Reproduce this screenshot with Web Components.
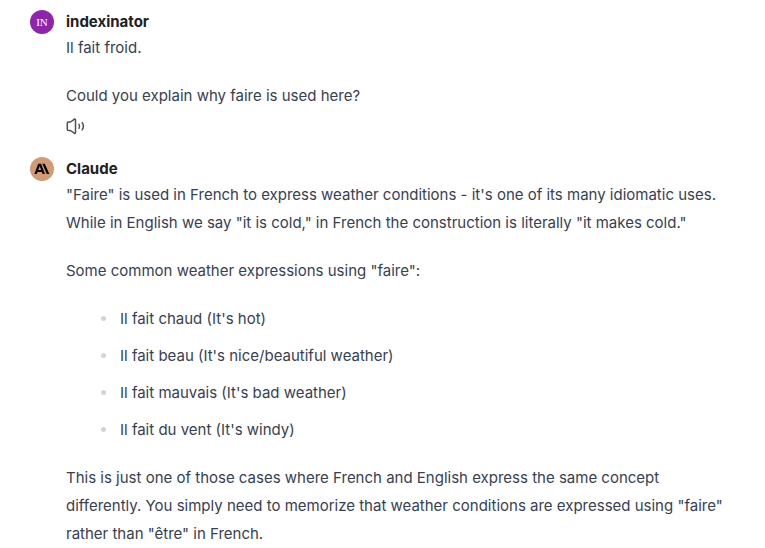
<!DOCTYPE html>
<html lang="en">
<head>
<meta charset="utf-8">
<title>Conversation</title>
<style>
body{margin:0;background:#fff;color:#374151;font:15px/28px Inter,"Liberation Sans",sans-serif}
li{padding-left:2px}
li::marker{color:#d1d5db}
</style>
</head>
<body>
<chat-thread>
  <chat-message author="indexinator">
    <user-avatar slot="avatar" initials="IN"></user-avatar>
    <p>Il fait froid.</p>
    <p>Could you explain why faire is used here?</p>
    <speak-button slot="actions"></speak-button>
  </chat-message>
  <chat-message author="Claude">
    <model-avatar slot="avatar"></model-avatar>
    <p>"Faire" is used in French to express weather conditions - it's one of its many idiomatic uses. While in English we say "it is cold," in French the construction is literally "it makes cold."</p>
    <p>Some common weather expressions using "faire":</p>
    <ul>
      <li>Il fait chaud (It's hot)</li>
      <li>Il fait beau (It's nice/beautiful weather)</li>
      <li>Il fait mauvais (It's bad weather)</li>
      <li>Il fait du vent (It's windy)</li>
    </ul>
    <p>This is just one of those cases where French and English express the same concept differently. You simply need to memorize that weather conditions are expressed using "faire" rather than "être" in French.</p>
  </chat-message>
</chat-thread>
<script>
class ShadowElement extends HTMLElement {
  connectedCallback() {
    if (!this.shadowRoot) this.attachShadow({mode: "open"}).innerHTML = this.render();
  }
}
customElements.define("chat-thread", class extends ShadowElement {
  render() { return `<style>
    :host{display:flex;flex-direction:column;gap:21px;padding:10px 30px 0}
    </style><slot></slot>`; }
});
customElements.define("chat-message", class extends ShadowElement {
  render() { return `<style>
    :host{display:grid;grid-template-columns:24px minmax(0,1fr);column-gap:12px}
    h2{margin:0;font-size:15px;line-height:24px;font-weight:700;color:#212121}
    .body{display:flex;flex-direction:column;gap:20px}
    ::slotted(p){margin:0}
    ::slotted(ul){display:grid;row-gap:9px;margin:0;padding-left:52px}
    </style>
    <slot name="avatar"></slot>
    <article><h2>${this.getAttribute("author")}</h2><div class="body"><slot></slot></div><slot name="actions"></slot></article>`; }
});
customElements.define("user-avatar", class extends ShadowElement {
  render() { return `<style>
    :host{display:grid;place-items:center;width:24px;height:24px;border-radius:50%;background:#8e24aa;color:#fff;font:11px/24px "Liberation Serif",serif}
    </style><span>${this.getAttribute("initials")}</span>`; }
});
customElements.define("model-avatar", class extends ShadowElement {
  render() { return `<style>
    :host{display:grid;place-items:center;width:24px;height:24px;border-radius:50%;background:#d29b75}
    </style><svg width="16" height="12" viewBox="0 0 16 12" role="img" aria-label="Claude"><path fill="#000" fill-rule="evenodd" d="M4.200 .8h2.800L11 11H8.700L7.900 8.900H3.500L2.700 11H.4zM4.200 7h3L5.700 3.200zM8.300 .8h2.500L15.300 11h-2.500z"/></svg>`; }
});
customElements.define("speak-button", class extends ShadowElement {
  render() { return `<style>
    :host{display:flex;padding-top:6px}
    button{display:flex;border:0;padding:0;background:none;color:#505050}
    </style><button type="button" aria-label="Read aloud"><svg width="20" height="20" viewBox="0 0 20 20" fill="none" stroke="currentColor" stroke-width="1.500" stroke-linecap="round" stroke-linejoin="round"><path d="M1.300 7.200q0-1.200 1.200-1.200h2L8.200 3.300q1.300-.6 1.300.7v12.500q0 1.300-1.300.7L4.500 14.500h-2q-1.200 0-1.200-1.200zM13 8.300q1.300 2 0 4M16.200 6.800q2.500 3.500 0 7"/></svg></button>`; }
});
</script>
</body>
</html>
